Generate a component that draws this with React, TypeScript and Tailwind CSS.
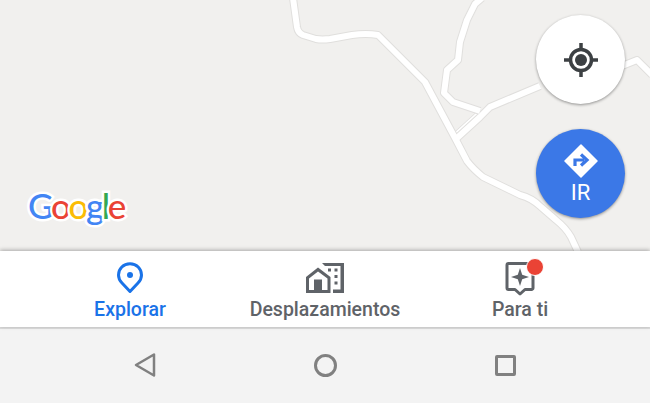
export default function App() {
  const roads = [
    "M293 -2 L297 27 Q298 33 303 35 L316 39 Q322 40 330 39 L352 35 Q366 33 378 35 L425 82 L455 138 L467 161 Q473 169 483 177 L520 195 Q532 198 541 207 L556 220 Q566 228 571 237 L578 252",
    "M482 -2 L475 4 L467 20 L460 42 L458 60 L447 70 L444 93 L453 102 L480 111",
    "M457 138 L480 117 L490 107 L540 86",
    "M622 66 L637 60 L652 75",
  ];
  return (
    <div className="w-[650px] h-[403px] flex flex-col overflow-hidden bg-[#f3f3f3] font-['Roboto',sans-serif]">
      <div className="relative h-[251px] bg-[#f1f0ee] overflow-hidden">
        <svg width="650" height="251" viewBox="0 0 650 251" fill="none" className="block">
          <path d="M455 134 L478 113" stroke="#dedddb" strokeWidth="4" />
          <path d="M455 134 L478 113" stroke="#ffffff" strokeWidth="2.5" />
          {roads.map((d) => (
            <path key={d + "e"} d={d} stroke="#e0dfdd" strokeWidth="8" strokeLinejoin="round" />
          ))}
          {roads.map((d) => (
            <path key={d} d={d} stroke="#ffffff" strokeWidth="6" strokeLinejoin="round" />
          ))}
        </svg>
        <div className="absolute left-[28px] top-[181px] text-[35px] leading-[48px] font-medium tracking-[-2.4px] font-['Lato',sans-serif] [-webkit-text-stroke:5px_white] [paint-order:stroke_fill]">
          <span className="text-[#4285f4]">G</span>
          <span className="text-[#ea4335]">o</span>
          <span className="text-[#fbbc05]">o</span>
          <span className="text-[#4285f4]">g</span>
          <span className="text-[#34a853]">l</span>
          <span className="text-[#ea4335]">e</span>
        </div>
        <div className="absolute left-[536px] top-[15px] w-[89px] h-[89px] rounded-full bg-white shadow-[0_1px_3px_rgba(0,0,0,0.4)] flex items-center justify-center">
          <svg width="36" height="36" viewBox="0 0 36 36" fill="none">
            <circle cx="18" cy="18" r="10.5" stroke="#3c4043" strokeWidth="3.5" />
            <circle cx="18" cy="18" r="6" fill="#3c4043" />
            <path d="M18 1V7M18 29V35M1 18H7M29 18H35" stroke="#3c4043" strokeWidth="3.5" />
          </svg>
        </div>
        <div className="absolute left-[536px] top-[129px] w-[89px] h-[89px] rounded-full bg-[#3b78e7] shadow-[0_1px_3px_rgba(0,0,0,0.4)] flex flex-col items-center pt-[15px]">
          <svg width="34" height="34" viewBox="0 0 34 34" className="block">
            <path d="M17 1 L33 17 L17 33 L1 17 Z" fill="#fff" stroke="#fff" strokeLinejoin="round" strokeWidth="1.5" />
            <path d="M11 22 V16 H20 M17 10.5 L23 16 L17 21.5" fill="none" stroke="#3b78e7" strokeWidth="3.2" />
          </svg>
          <span className="text-white text-[22px] leading-[24px] mt-[3px] font-normal">IR</span>
        </div>
      </div>

      <div className="relative h-[76px] bg-white shadow-[0_-1px_4px_rgba(0,0,0,0.3)] grid grid-cols-3 px-[32.5px] text-[#5f6368] text-[19.5px] font-medium">
        <div className="flex flex-col items-center pt-[11px] text-[#1a73e8]">
          <svg width="28" height="32" viewBox="0 0 28 32" fill="none" className="block">
            <path d="M14 29.5 L6 21 C3.5 18.5 2.5 15.8 2.5 13 C2.5 6.5 7.5 1.8 14 1.8 C20.5 1.8 25.5 6.5 25.5 13 C25.5 15.8 24.5 18.5 22 21 Z" stroke="#1a73e8" strokeWidth="3" strokeLinejoin="round" />
            <circle cx="14" cy="13" r="3" fill="#1a73e8" />
          </svg>
          <span className="leading-[24px] mt-[4px]">Explorar</span>
        </div>
        <div className="flex flex-col items-center pt-[11px]">
          <svg width="40" height="32" viewBox="0 0 40 32" fill="#5f6368" className="block">
            <path d="M13 5.5 L25.5 15 V31 H1 V15 Z M13 9.5 L4 16.5 V28 H9 V17.5 H17 V28 H22.5 V16.5 Z" fillRule="evenodd" />
            <path d="M17 1 H39 V31 H28 V27.5 H35.5 V4 H20 Z" />
            <rect x="23" y="6.5" width="3" height="3" />
            <rect x="29.5" y="6.5" width="3" height="3" />
            <rect x="29.5" y="13" width="3" height="3" />
            <rect x="29.5" y="19.5" width="3" height="3" />
          </svg>
          <span className="leading-[24px] mt-[4px]">Desplazamientos</span>
        </div>
        <div className="flex flex-col items-center pt-[11px]">
          <div className="relative w-[30px] h-[32px]">
            <svg width="30" height="34" viewBox="0 0 30 34" fill="none" className="block">
              <path d="M3.5 1.5 H26.5 A1.5 1.5 0 0 1 28 3 V26 A1.5 1.5 0 0 1 26.5 27.5 H20 L15 32 L10 27.5 H3.5 A1.5 1.5 0 0 1 2 26 V3 A1.5 1.5 0 0 1 3.5 1.5 Z" stroke="#5f6368" strokeWidth="3" strokeLinejoin="round" />
              <path d="M15 6 L17.2 12.8 L24 15 L17.2 17.2 L15 24 L12.8 17.2 L6 15 L12.8 12.8 Z" fill="#5f6368" />
            </svg>
            <span className="absolute left-[21px] top-[-4px] w-[18px] h-[18px] rounded-full bg-[#ea4335] border border-white" />
          </div>
          <span className="leading-[24px] mt-[4px]">Para ti</span>
        </div>
      </div>

      <div className="h-[2px] bg-[#dcdcdc]" />

      <div className="flex-1 flex justify-center items-center pb-[2px]">
        <div className="w-[180px] flex justify-center">
          <svg width="24" height="26" viewBox="0 0 24 26" fill="none" className="block">
            <path d="M21 2.5 V23.5 L3 13 Z" stroke="#808080" strokeWidth="2.5" strokeLinejoin="round" />
          </svg>
        </div>
        <div className="w-[180px] flex justify-center">
          <div className="w-[23px] h-[23px] rounded-full border-[3px] border-[#808080]" />
        </div>
        <div className="w-[180px] flex justify-center">
          <div className="w-[21px] h-[21px] rounded-[2px] border-[3px] border-[#808080]" />
        </div>
      </div>
    </div>
  );
}
